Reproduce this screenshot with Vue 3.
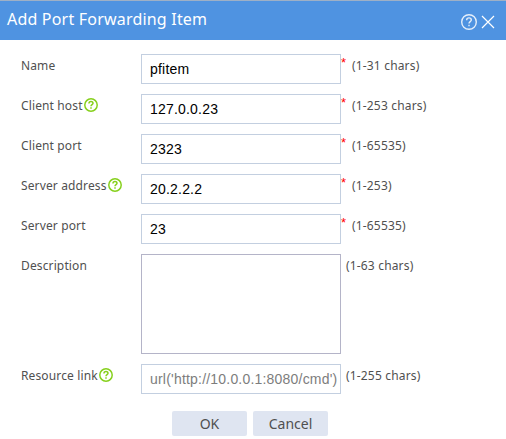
<template>
	<div class="dialog">
		<header>
			<h1>Add Port Forwarding Item</h1>
			<svg class="help" viewBox="0 0 16 16">
				<circle cx="8" cy="8" r="7.3" />
				<path d="M5.7 6.3V6a2.3 2.1 0 0 1 4.6 0c0 1.5-2.3 1.7-2.3 3.4M8 10.7v1.5" />
			</svg>
			<svg class="close" viewBox="0 0 14 14">
				<path d="M1 1l12 12M13 1L1 13" />
			</svg>
		</header>

		<form @submit.prevent>
			<div class="row" v-for="f in fields" :key="f.label">
				<label>
					<span>{{ f.label }}</span>
					<svg v-if="f.help" class="help" viewBox="0 0 16 16">
						<circle cx="8" cy="8" r="7.1" />
						<path d="M5.7 6.3V6a2.3 2.1 0 0 1 4.6 0c0 1.5-2.3 1.7-2.3 3.4M8 10.7v1.5" />
					</svg>
				</label>
				<textarea v-if="f.multiline" v-model="f.value"></textarea>
				<input v-else type="text" v-model="f.value" :placeholder="f.placeholder">
				<span v-if="f.required" class="star">*</span>
				<span class="hint" :class="{ optional: !f.required }">{{ f.hint }}</span>
			</div>
			<div class="buttons">
				<button type="submit">OK</button>
				<button type="button">Cancel</button>
			</div>
		</form>
	</div>
</template>

<script setup>
	import { ref } from 'vue';

	const fields = ref([
		{ label: 'Name', value: 'pfitem', hint: '(1-31 chars)', required: true },
		{ label: 'Client host', value: '127.0.0.23', hint: '(1-253 chars)', required: true, help: true },
		{ label: 'Client port', value: '2323', hint: '(1-65535)', required: true },
		{ label: 'Server address', value: '20.2.2.2', hint: '(1-253)', required: true, help: true },
		{ label: 'Server port', value: '23', hint: '(1-65535)', required: true },
		{ label: 'Description', value: '', hint: '(1-63 chars)', multiline: true },
		{ label: 'Resource link', value: '', placeholder: "url('http://10.0.0.1:8080/cmd')", hint: '(1-255 chars)', help: true },
	]);
</script>

<style>
	body { background-color: white }
</style>

<style scoped>
	.dialog {
		height: 439px;
		box-sizing: border-box;
		border-top: 1px solid #9eb0c6;
		background-color: white;
		font-family: "Noto Sans", sans-serif;
		font-size: 12px;
		color: #505050;
	}

	header {
		display: flex;
		height: 39px;
		box-sizing: border-box;
		padding: 0 11px 0 7px;
		background-color: #4f93e1;
		color: white;
	}

	h1 {
		margin: 0;
		flex: 1;
		font-size: 16px;
		font-weight: normal;
		line-height: 37px;
		letter-spacing: 0.2px;
	}

	svg {
		flex: none;
		fill: none;
		stroke: currentColor;
	}

	header .help {
		width: 16px;
		height: 16px;
		margin: 13px 4px 0 0;
		stroke-width: 1.4;
		opacity: 0.85;
	}

	.close {
		width: 14px;
		height: 14px;
		margin-top: 14px;
		stroke-width: 1.2;
	}

	form { padding: 14px 0 0 21px }

	.row {
		display: flex;
		align-items: flex-start;
		margin-bottom: 10px;
	}

	label {
		display: flex;
		width: 120px;
		line-height: 24px;
		letter-spacing: 0.13px;
	}

	label .help {
		width: 14px;
		height: 14px;
		margin: 4px 0 0 1px;
		stroke-width: 1.7;
		color: #86d01c;
	}

	input, textarea {
		box-sizing: border-box;
		width: 200px;
		height: 30px;
		margin: 0;
		padding: 0 0 0 8px;
		border: 1px solid #c3cfe0;
		border-radius: 0;
		background-color: white;
		font-family: "Liberation Sans", Arial, sans-serif;
		font-size: 14px;
		letter-spacing: 0.2px;
		color: black;
		outline: none;
	}

	input::placeholder { color: #7d7d7d }

	textarea {
		height: 100px;
		border-color: #b4b4c8;
		resize: none;
	}

	.star {
		width: 11px;
		font-family: "Liberation Sans", Arial, sans-serif;
		font-size: 13px;
		line-height: 18px;
		color: red;
	}

	.hint {
		line-height: 24px;
		letter-spacing: 0.17px;
	}

	.hint.optional { margin-left: 5px }

	.buttons {
		display: flex;
		gap: 6px;
		padding: 7px 0 0 151px;
	}

	button {
		width: 75px;
		height: 25px;
		padding: 0;
		border: none;
		border-radius: 2px;
		background-color: #dfe5f1;
		font-family: "Noto Sans", sans-serif;
		font-size: 14px;
		color: #505050;
	}
</style>
